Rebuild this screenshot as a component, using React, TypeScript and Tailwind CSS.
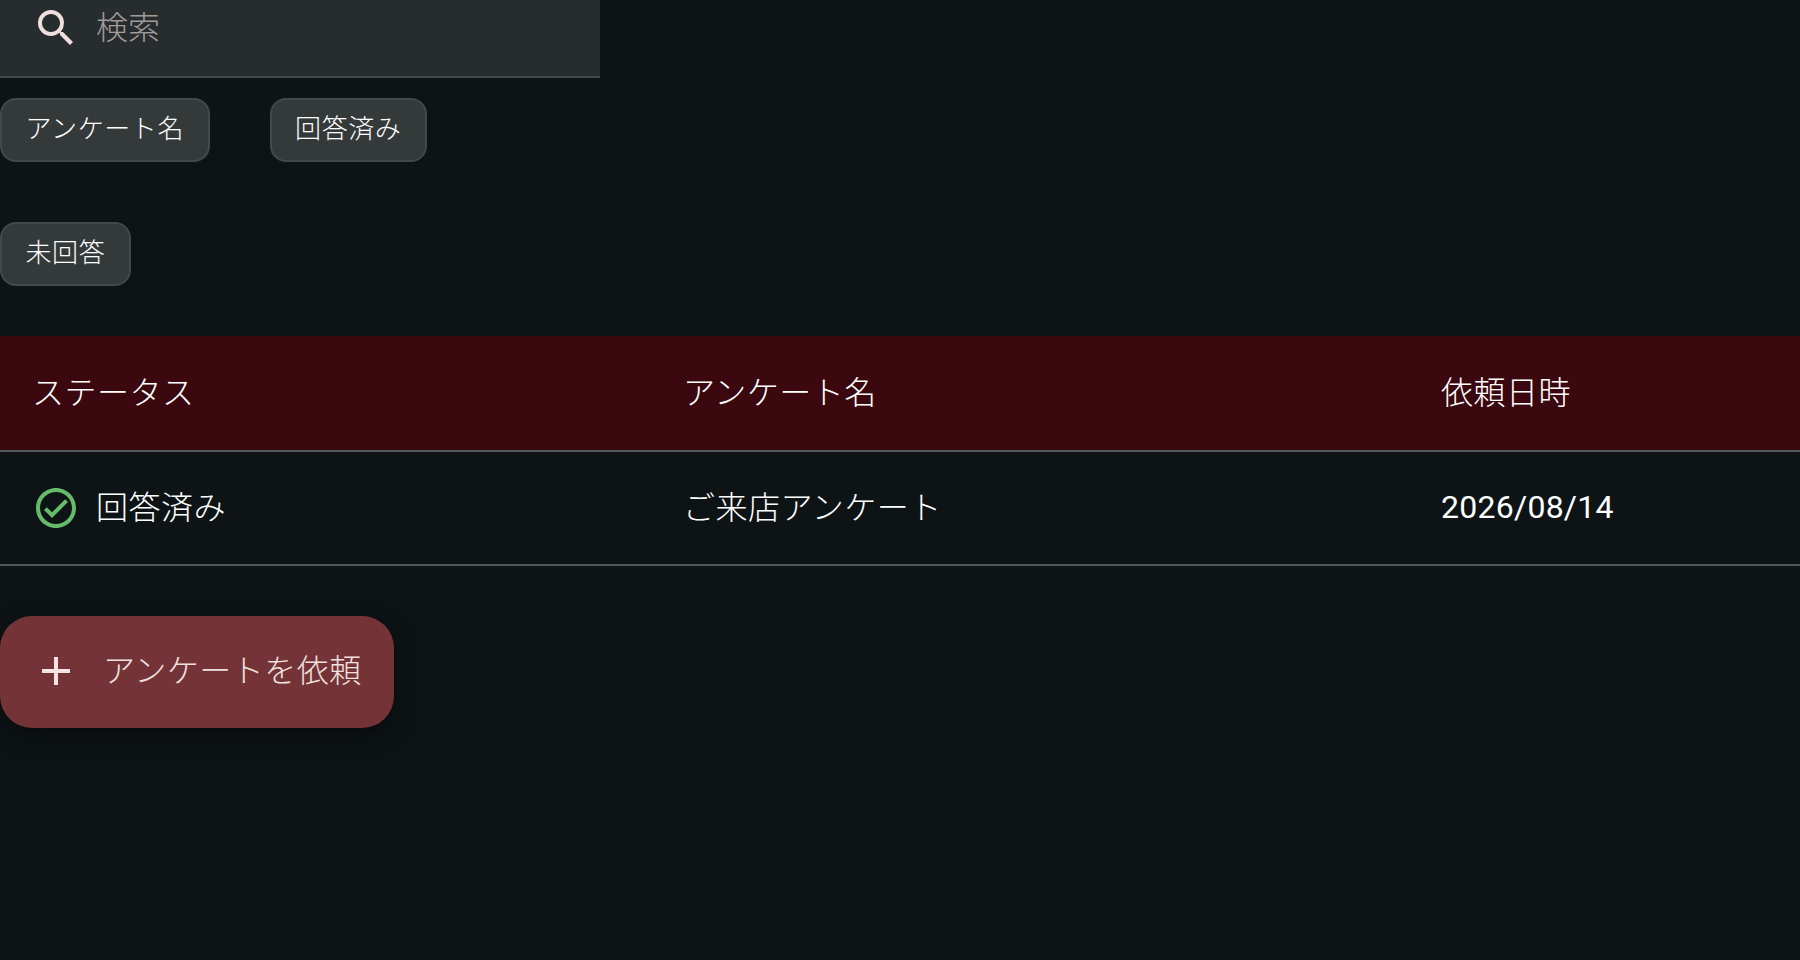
import { MdAdd, MdOutlineCheckCircle, MdSearch } from "react-icons/md";

const filters = ["アンケート名", "回答済み", "未回答"];

export default function App() {
  return (
    <div className="h-[960px] w-full overflow-hidden bg-[#0e1416] font-['Roboto','Noto_Sans_CJK_JP',sans-serif] font-light tracking-[0.5px] text-white">
      {/* Search */}
      <div className="flex h-[78px] w-[600px] items-center gap-4 border-b-2 border-[#41494b] bg-[#272c2f] pb-5 pl-8">
        <MdSearch className="h-12 w-12 shrink-0 text-[#f0dfdd]" />
        <span className="text-[32px] leading-10 tracking-normal text-[#a39b9a]">検索</span>
      </div>

      {/* Filter chips */}
      <div className="mt-5 flex w-[600px] flex-wrap gap-[60px]">
        {filters.map((f) => (
          <div
            key={f}
            className="flex h-16 items-center rounded-2xl border-2 border-[#42494b] bg-[#343a3a] px-[23.5px] pb-[2px] text-[26px] tracking-[0.6px] text-white"
          >
            {f}
          </div>
        ))}
      </div>

      {/* Table */}
      <div className="mt-[50px]">
        <div className="grid h-[116px] grid-cols-[651px_758px_1fr] items-center border-b-2 border-[#52585a] bg-[#3a080e] text-[32px]">
          <div className="pl-8">ステータス</div>
          <div className="pl-8">アンケート名</div>
          <div className="pl-8">依頼日時</div>
        </div>
        <div className="grid h-[114px] grid-cols-[651px_758px_1fr] items-center border-b-2 border-[#52585a] text-[32px]">
          <div className="flex items-center gap-4 pl-8">
            <MdOutlineCheckCircle className="h-12 w-12 shrink-0 text-[#66bb6a]" />
            <span>回答済み</span>
          </div>
          <div className="pl-8">ご来店アンケート</div>
          <div className="pb-[2px] pl-8 font-normal tracking-[0.25px]">2026/08/14</div>
        </div>
      </div>

      {/* Request button */}
      <button className="mt-[50px] flex h-28 items-center gap-[23px] rounded-[32px] bg-[#743437] pb-[2px] pl-8 pr-8 text-[32px] text-[#f0e0df] shadow-[0_8px_24px_rgba(0,0,0,0.5)]">
        <MdAdd className="h-12 w-12 shrink-0 text-[#f5e4e3]" />
        <span>アンケートを依頼</span>
      </button>
    </div>
  );
}
